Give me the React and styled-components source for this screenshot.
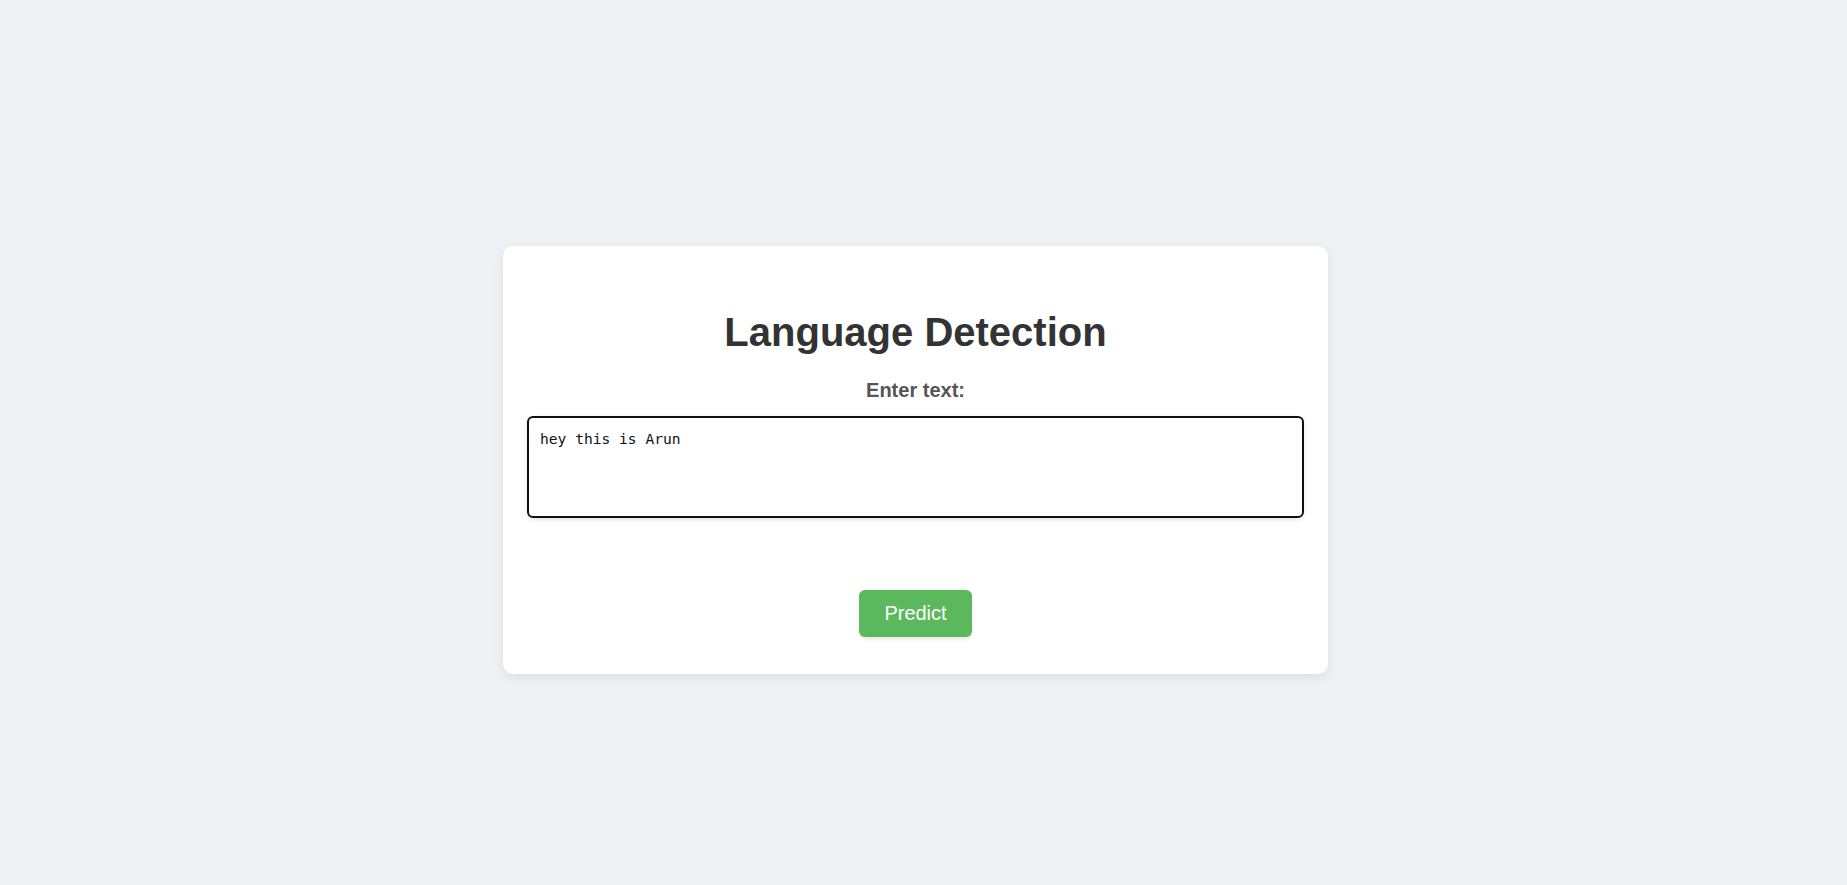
import React, { useState } from "react";
import styled, { createGlobalStyle } from "styled-components";

const GlobalStyle = createGlobalStyle`
  html, body {
    margin: 0;
    padding: 0;
    background: #f0f1f5;
    font-family: "Liberation Sans", Arial, sans-serif;
  }
  * { box-sizing: border-box; }
`;

const Page = styled.div`
  min-height: 100vh;
  display: flex;
  justify-content: center;
  align-items: flex-start;
  padding: 246px 16px 0 0;
`;

const Card = styled.div`
  width: 825px;
  background: #ffffff;
  border-radius: 10px;
  box-shadow: 0 4px 12px rgba(0, 0, 0, 0.08);
  padding: 63px 24px 37px;
  display: flex;
  flex-direction: column;
  align-items: center;
`;

const Title = styled.h1`
  margin: 0;
  font-size: 40px;
  line-height: 46px;
  font-weight: 700;
  color: #333333;
`;

const Label = styled.label`
  margin-top: 24px;
  font-size: 20px;
  line-height: 23px;
  font-weight: 700;
  color: #555555;
`;

const TextArea = styled.textarea`
  margin-top: 14px;
  width: 100%;
  height: 102px;
  resize: none;
  border: 2px solid #111111;
  border-radius: 6px;
  padding: 12px 11px 9px;
  font-family: "DejaVu Sans Mono", "Liberation Mono", monospace;
  font-size: 14.6px;
  line-height: 17px;
  color: #111111;
  background: #ffffff;
  box-shadow: 0 2px 5px rgba(0, 0, 0, 0.1);
  outline: none;
`;

const Button = styled.button`
  margin-top: 72px;
  padding: 12px 25px;
  font-family: "Liberation Sans", Arial, sans-serif;
  font-size: 20px;
  line-height: 23px;
  color: #ffffff;
  background: #5cb85c;
  border: none;
  border-radius: 6px;
  box-shadow: 0 2px 4px rgba(0, 0, 0, 0.1);
  cursor: pointer;
`;

export default function App() {
  const [text, setText] = useState("hey this is Arun");
  return (
    <>
      <GlobalStyle />
      <Page>
        <Card>
          <Title>Language Detection</Title>
          <Label htmlFor="txt">Enter text:</Label>
          <TextArea id="txt" value={text} onChange={(e) => setText(e.target.value)} />
          <Button>Predict</Button>
        </Card>
      </Page>
    </>
  );
}
